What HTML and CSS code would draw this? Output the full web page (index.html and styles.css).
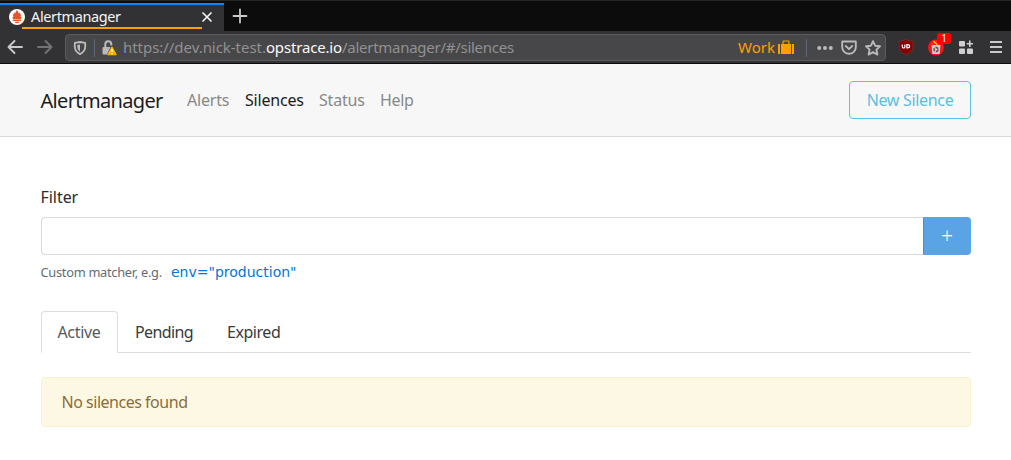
FILE: index.html
```html
<!DOCTYPE html>
<html lang="en">
<head>
<meta charset="utf-8">
<title>Alertmanager</title>
<link rel="stylesheet" href="styles.css">
</head>
<body>
<div class="tabbar">
  <div class="browser-tab">
    <svg class="favicon" width="16" height="16" viewBox="0 0 16 16"><circle cx="8" cy="8" r="8" fill="#fff"/><path d="M8 1C8.900 2.600 9.600 3.400 9.900 4.800c.4-.5.5-1 .6-1.500 1.200 1.500 1.800 3 1 5l1.300-.4-.9 2.300H4.100L3.200 7.900l1.300.4c-.8-2-.2-3.500 1-5 .1.500.200 1 .600 1.500C6.400 3.400 7.100 2.600 8 1zM3.800 10.700h8.400v1.400H3.800zM5.300 12.700h5.400c-.6 1.900-4.800 1.900-5.400 0z" fill="#e6522c"/></svg>
    <span class="tab-title">Alertmanager</span>
    <svg class="tab-close" width="12" height="12" viewBox="0 0 12 12"><path d="M2 2l8 8M10 2l-8 8" stroke="#f3f3f3" stroke-width="1.700" stroke-linecap="round"/></svg>
  </div>
  <svg class="new-tab" width="16" height="16" viewBox="0 0 16 16"><path d="M8 1.500v13M1.500 8h13" stroke="#c8c8c8" stroke-width="1.800" stroke-linecap="round"/></svg>
</div>
<div class="toolbar">
  <svg class="back" width="16" height="16" viewBox="0 0 16 16" fill="none" stroke="#c9c9ca" stroke-width="1.900" stroke-linecap="round" stroke-linejoin="round"><path d="M15 8H1.500M7.500 2l-6 6 6 6"/></svg>
  <svg class="forward" width="16" height="16" viewBox="0 0 16 16" fill="none" stroke="#737375" stroke-width="1.900" stroke-linecap="round" stroke-linejoin="round"><path d="M1 8h13.500M8.500 2l6 6-6 6"/></svg>
  <div class="urlbar">
    <svg class="shield" width="14" height="14" viewBox="0 0 14 14"><path d="M7 1L12.200 1.900v3.900c0 3.200-2 5.800-5.200 7.300-3.200-1.500-5.200-4.100-5.200-7.300V1.900z" fill="none" stroke="#bcbcbd" stroke-width="1.800" stroke-linejoin="round"/><path d="M7 3.500v7.200c-1.700-1.200-2.700-2.700-2.700-4.900V4z" fill="#bcbcbd"/></svg>
    <i class="divider"></i>
    <svg class="lock" width="15" height="16" viewBox="0 0 15 16"><path d="M3.300 8V4.300a3 3 0 0 1 6 0V5.500" fill="none" stroke="#b9b9ba" stroke-width="2"/><path d="M1.500 7H8.500L5 14.500H1.500Q.5 14.500.5 13.500V8Q.5 7 1.500 7z" fill="#b9b9ba"/><path d="M10 6.800l4.300 8h-8.600z" fill="#ffb000" stroke="#ffb000" stroke-linejoin="round"/><path d="M10 8.800v3.200M10 13v1.300" stroke="#fff" stroke-width="1.300"/></svg>
    <span class="url">https://dev.nick-test.<b>opstrace.io</b><span class="path">/alertmanager/#/silences</span></span>
    <span class="work">Work</span>
    <svg class="briefcase" width="16" height="16" viewBox="0 0 16 16" fill="#ff9f00"><path d="M0 4h2v10H0zM3 4h10v10H3zM14 4h2v10h-2z"/><path d="M5 4V1.700Q5 1 5.700 1h4.600q.7 0 .7.700V4" fill="none" stroke="#ff9f00" stroke-width="1.200"/></svg>
    <i class="divider end"></i>
    <svg class="dots" width="16" height="16" viewBox="0 0 16 16" fill="#b9b9ba"><circle cx="2.200" cy="8" r="2"/><circle cx="8" cy="8" r="2"/><circle cx="13.800" cy="8" r="2"/></svg>
    <svg class="pocket" width="16" height="16" viewBox="0 0 16 16" fill="none" stroke="#b9b9ba" stroke-width="1.900" stroke-linecap="round" stroke-linejoin="round"><path d="M1.200 1.500h13.600v5.700a6.800 6.600 0 0 1-13.600 0z"/><path d="M4.800 6L8 9.200 11.200 6"/></svg>
    <svg class="star" width="16" height="16" viewBox="0 0 16 16"><path d="M8 1.200l2.100 4.500 4.900.6-3.600 3.300 1 5L8 12.200l-4.400 2.400 1-5L1 6.300l4.900-.6z" fill="none" stroke="#b9b9ba" stroke-width="1.900" stroke-linejoin="round"/></svg>
  </div>
  <svg class="ublock" width="16" height="16" viewBox="0 0 16 16"><path d="M8 .3c2 1.300 4 1.900 7 2v5.700c0 3.500-2.800 5.900-7 7.700-4-1.800-7-4.200-7-7.700V2.300C4 2.200 6 1.600 8 .3z" fill="#850000" stroke="#7a3a3a" stroke-width=".6"/><path d="M4.300 5.500v2.200q0 1.300 1.300 1.300t1.300-1.300V5.500M8.900 5.700v3.200h.6q2.100 0 2.100-1.600T9.500 5.700z" fill="none" stroke="#fff" stroke-width="1.200"/></svg>
  <div class="extension">
    <svg width="18" height="18" viewBox="0 0 18 18"><circle cx="9" cy="9.500" r="8" fill="#f01818"/><path d="M4.500 7h9l-.8 9H5.300z" fill="#d6c6c6"/><path d="M3.500 6.500l7-4 1 1.500-7 4z" fill="#ff2828"/><path d="M6.500 3.200l3.800 3.500" stroke="#ffc400" stroke-width="1.500"/><circle cx="9" cy="11.500" r="2" fill="none" stroke="#554b4b" stroke-width="1.300" stroke-dasharray="3 1"/></svg>
    <span class="badge">1</span>
  </div>
  <svg class="apps" width="16" height="16" viewBox="0 0 16 16" fill="#d0d0d1"><rect x="1" y="2" width="6" height="5.500" rx="1"/><rect x="1" y="9.500" width="6" height="5.500" rx="1"/><rect x="9" y="9.500" width="6" height="5.500" rx="1"/><path d="M11 1.500h1.600V4H15v1.500h-2.400V8H11V5.500H8.700V4H11z"/></svg>
  <svg class="menu" width="12" height="14" viewBox="0 0 12 14"><path d="M0 2h12M0 7h12M0 12h12" stroke="#c9c9ca" stroke-width="2"/></svg>
</div>
<header class="navbar">
  <a class="brand">Alertmanager</a>
  <nav class="nav">
    <a class="nav-alerts">Alerts</a><a class="nav-silences active">Silences</a><a class="nav-status">Status</a><a class="nav-help">Help</a>
  </nav>
  <a class="new-silence">New Silence</a>
</header>
<main class="content">
  <label class="filter-label" for="matcher">Filter</label>
  <div class="input-group"><input id="matcher" class="filter-input" type="text"><button class="add">+</button></div>
  <div class="hint"><span class="help-text">Custom matcher, e.g.</span><a class="example">env="production"</a></div>
  <div class="tabs"><a class="tab selected">Active</a><a class="tab pending">Pending</a><a class="tab expired">Expired</a></div>
  <div class="alert"><span>No silences found</span></div>
</main>
</body>
</html>
```
FILE: styles.css
```css
* { box-sizing: border-box; }
body { margin: 0; height: 460px; overflow: hidden; background: #fff; color: #292b2c; font: 16px/24px "Noto Sans", sans-serif; }
svg { display: block; flex: none; }
.tabbar { height: 31px; display: flex; background: #0c0c0d; border-top: 1px solid #252627; }
.browser-tab { position: relative; width: 224px; height: 28px; margin-top: 2px; border-top: 2px solid #0a84ff; background: #323234; display: flex; align-items: center; padding: 0 11px 2px 9px; }
.browser-tab::after { content: ""; position: absolute; left: 22px; right: 22px; bottom: 2px; height: 2px; background: #ffa000; }
.tab-title { margin-left: 6px; padding-bottom: 2px; flex: 1; color: #f5f5f6; font-size: 14.500px; line-height: 20px; letter-spacing: -.38px; }
.new-tab { margin: 7px 0 0 8px; }
.toolbar { height: 33px; display: flex; align-items: center; background: #323234; border-bottom: 1px solid #0c0c0d; padding: 0 9px 0 7px; }
.forward { margin-left: 14px; }
.urlbar { width: 821px; height: 27px; margin-left: 12px; margin-top: 1px; flex: none; display: flex; align-items: center; border: 1px solid #5b5b5d; border-radius: 4px; background: #474749; padding: 0 4px 0 7px; }
.divider { width: 1px; height: 18px; margin: 0 7px; background: #626871; }
.url { margin-left: 6px; padding-bottom: 1px; flex: 1; color: #919192; font-size: 15px; letter-spacing: -.04px; white-space: nowrap; }
.url b { font-weight: 400; letter-spacing: -.16px; color: #f9f9fa; }
.path { letter-spacing: -.27px; }
.work { color: #ff9f00; font-size: 15px; padding-bottom: 1px; }
.briefcase { margin-left: 3px; }
.divider.end { margin: 0 10px 0 12px; }
.pocket, .star { margin-left: 8px; }
.ublock { margin-left: 12px; }
.extension { position: relative; margin-left: 13px; }
.badge { position: absolute; left: 10px; top: -5px; width: 14px; height: 11px; border-radius: 2px; background: #f00; color: #fff; font-size: 10px; line-height: 11px; text-align: center; }
.apps { margin-left: 13px; }
.menu { margin-left: auto; margin-right: 0; }
.navbar { height: 73px; display: flex; align-items: center; padding: 0 40px 0 40.500px; background: #f7f7f7; border-bottom: 1px solid #d9d9d9; }
.brand { width: 146.500px; padding-top: 2px; font-size: 20px; letter-spacing: -.66px; color: #1c1c1c; white-space: nowrap; }
.nav { display: flex; color: #888; letter-spacing: -.2px; }
.nav a { white-space: nowrap; }
.nav-alerts { width: 58px; }
.nav-silences { width: 74px; }
.nav-status { width: 61px; }
.nav-help { letter-spacing: -.35px; }
.nav .active { color: #1c1c1c; }
.new-silence { margin-left: auto; width: 122px; height: 38px; line-height: 36px; text-align: center; border: 1px solid #5bc0de; border-radius: 4px; color: #5bc0de; letter-spacing: -.32px; }
.content { padding: 48px 40px 0 41px; }
.filter-label { display: block; margin: 0 0 8px -.5px; letter-spacing: -.05px; }
.input-group { display: flex; height: 38px; }
.filter-input { flex: 1; min-width: 0; border: 1px solid #d9d9d9; border-right: 0; border-radius: 4px 0 0 4px; background: #fff; }
.add { width: 48px; border: 1px solid #5aa4e6; border-left-color: #4291d8; border-radius: 0 4px 4px 0; background: #5aa4e6; color: #fff; font: 300 21px/24px "Noto Sans", sans-serif; padding: 0; }
.hint { display: flex; align-items: center; height: 34px; }
.help-text { width: 130px; margin-left: -.5px; margin-right: .5px; color: #636c72; font-size: 12.800px; letter-spacing: -.27px; white-space: nowrap; }
.example { color: #0275d8; font: 14px/21px "DejaVu Sans", sans-serif; }
.tabs { display: flex; margin-top: 22px; height: 42px; border-bottom: 1px solid #ddd; }
.tab { height: 42px; padding: 8px 16px; border: 1px solid transparent; color: #373a3c; white-space: nowrap; letter-spacing: -.45px; }
.tab.selected { width: 77px; padding-left: 15.500px; border-color: #ddd #ddd #fff; border-radius: 4px 4px 0 0; color: #55595c; letter-spacing: -.35px; }
.tab.pending { width: 92px; letter-spacing: -.6px; }
.alert { height: 50px; margin-top: 24px; padding: 12px 19.500px; border: 1px solid #faf2cc; border-radius: 4px; background: #fcf8e3; color: #8a6d3b; letter-spacing: -.48px; }
```
